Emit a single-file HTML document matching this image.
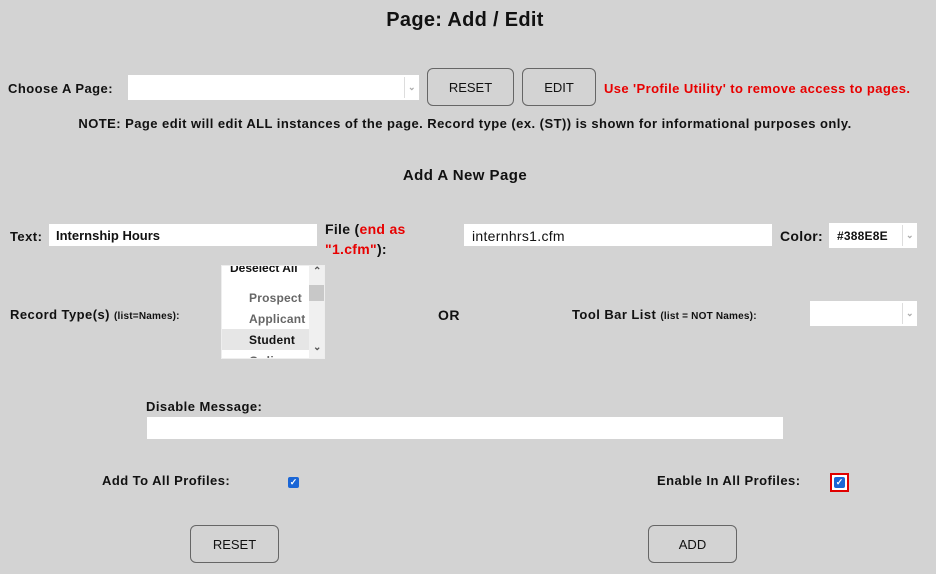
<!DOCTYPE html>
<html><head><style>
body{margin:0;width:936px;height:574px;background:#d3d3d3;font-family:"Liberation Sans",sans-serif;font-weight:bold;font-size:13px;letter-spacing:0.45px;color:#111;position:relative;overflow:hidden}
.a{position:absolute;white-space:nowrap}
.in{position:absolute;background:#fff}
.btn{position:absolute;border:1px solid #666;border-radius:6px;box-sizing:border-box;display:flex;align-items:center;justify-content:center;font-weight:normal;font-size:13px;letter-spacing:0;color:#111}
.sel{position:absolute;background:#fff}
.sel .ar{position:absolute;right:0;top:2px;bottom:2px;width:14px;border-left:1px solid #ddd;color:#aaa;font-size:9px;display:flex;align-items:center;justify-content:center}
.red{color:#e80000}
.cb{position:absolute;width:11px;height:11px;background:#1a66d6;border-radius:2px;color:#fff;font-size:9px;line-height:11px;text-align:center;letter-spacing:0}
</style></head><body>
<div class="a" style="left:0;width:930px;text-align:center;top:9px;font-size:20px;letter-spacing:0.3px">Page: Add / Edit</div>

<div class="a" style="left:8px;top:81px">Choose A Page:</div>
<div class="sel" style="left:128px;top:75px;width:291px;height:25px"><div class="ar">&#8964;</div></div>
<div class="btn" style="left:427px;top:68px;width:87px;height:38px">RESET</div>
<div class="btn" style="left:522px;top:68px;width:74px;height:38px">EDIT</div>
<div class="a red" style="left:604px;top:81px;letter-spacing:0.4px">Use 'Profile Utility' to remove access to pages.</div>
<div class="a" style="left:0;width:930px;text-align:center;top:116px">NOTE: Page edit will edit ALL instances of the page. Record type (ex. (ST)) is shown for informational purposes only.</div>

<div class="a" style="left:0;width:930px;text-align:center;top:167px;font-size:15px">Add A New Page</div>

<div class="a" style="left:10px;top:229px">Text:</div>
<div class="in" style="left:49px;top:224px;width:268px;height:22px"><span class="a" style="left:7px;top:4px;letter-spacing:0">Internship Hours</span></div>
<div class="a" style="left:325px;top:219px;line-height:20px;font-size:14px;letter-spacing:0.3px">File (<span class="red">end as</span><br><span class="red">"1.cfm"</span>):</div>
<div class="in" style="left:464px;top:224px;width:308px;height:22px"><span class="a" style="left:8px;top:4px;font-size:14px;font-weight:normal;letter-spacing:0.3px">internhrs1.cfm</span></div>
<div class="a" style="left:780px;top:228px;font-size:14px;letter-spacing:0.3px">Color:</div>
<div class="sel" style="left:829px;top:223px;width:88px;height:25px"><span class="a" style="left:8px;top:6px;font-size:12px;letter-spacing:0.2px">#388E8E</span><div class="ar">&#8964;</div></div>

<div class="a" style="left:10px;top:307px">Record Type(s) <span style="font-size:10px;letter-spacing:0.2px">(list=Names):</span></div>
<div class="in" style="left:221px;top:265px;width:104px;height:94px;overflow:hidden;border:1px solid #eee;box-sizing:border-box">
 <div class="a" style="left:8px;top:-5px;font-size:12px;letter-spacing:0">Deselect All</div>
 <div class="a" style="left:27px;top:25px;color:#666;font-size:12px;letter-spacing:0.2px">Prospect</div>
 <div class="a" style="left:27px;top:46px;color:#666;font-size:12px;letter-spacing:0.2px">Applicant</div>
 <div style="position:absolute;left:0;top:63px;width:87px;height:21px;background:#e6e6e6"></div>
 <div class="a" style="left:27px;top:67px;font-size:12px;letter-spacing:0.2px">Student</div>
 <div class="a" style="left:27px;top:88px;color:#666;font-size:12px">Online</div>
 <div style="position:absolute;left:87px;top:0;width:17px;height:94px;background:#f0f0f0"></div>
 <div style="position:absolute;left:87px;top:19px;width:16px;height:16px;background:#c8c8c8"></div>
 <div class="a" style="left:91px;top:0px;font-size:10px;color:#555">&#8963;</div>
 <div class="a" style="left:91px;top:76px;font-size:10px;color:#555">&#8964;</div>
</div>
<div class="a" style="left:438px;top:307px;font-size:14px">OR</div>
<div class="a" style="left:572px;top:307px">Tool Bar List <span style="font-size:10px;letter-spacing:0.2px">(list = NOT Names):</span></div>
<div class="sel" style="left:810px;top:301px;width:107px;height:25px"><div class="ar">&#8964;</div></div>

<div class="a" style="left:146px;top:399px">Disable Message:</div>
<div class="in" style="left:147px;top:417px;width:636px;height:22px"></div>

<div class="a" style="left:102px;top:473px">Add To All Profiles:</div>
<div class="cb" style="left:288px;top:477px">&#10003;</div>
<div class="a" style="left:657px;top:473px">Enable In All Profiles:</div>
<div style="position:absolute;left:830px;top:473px;width:19px;height:19px;box-sizing:border-box;border:2px solid #e00000;background:#fff"></div>
<div class="cb" style="left:834px;top:477px">&#10003;</div>

<div class="btn" style="left:190px;top:525px;width:89px;height:38px">RESET</div>
<div class="btn" style="left:648px;top:525px;width:89px;height:38px">ADD</div>
</body></html>
